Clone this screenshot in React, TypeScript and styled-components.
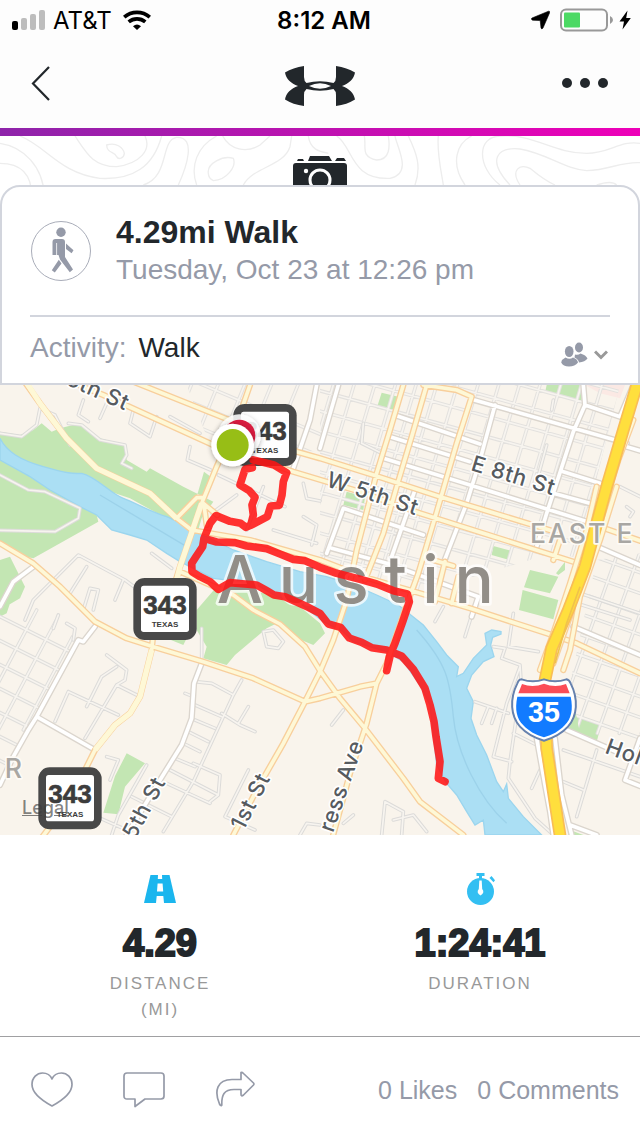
import React from "react";
import styled, { createGlobalStyle } from "styled-components";

const ink = "#22272b";
const slate = "#959aa8";
const rule = "#d2d5dd";
const sans = `"Liberation Sans", Arial, sans-serif`;
const system = `Inter, "Liberation Sans", sans-serif`;

const GlobalStyle = createGlobalStyle`
  * { box-sizing: border-box; }
  body { margin: 0; background: #fff; color: ${ink}; font-family: ${sans}; }
  button { border: 0; padding: 0; margin: 0; background: none; color: inherit; font: inherit; cursor: pointer; }
  svg { display: block; }
`;

const Page = styled.div`
  display: flex;
  flex-direction: column;
  min-height: 100vh;
`;

const StatusBar = styled.div`
  display: grid;
  grid-template-columns: 1fr auto 1fr;
  align-items: center;
  height: 40px;
  padding: 0 9px 0 12px;
  background: #fdfdfd;
  color: #000;
  font-family: ${system};
  font-size: 24px;
`;

const StatusGroup = styled.div<{ $end?: boolean }>`
  display: flex;
  align-items: center;
  gap: ${(p) => (p.$end ? 5 : 7)}px;
  justify-content: ${(p) => (p.$end ? "flex-end" : "flex-start")};
`;

const Carrier = styled.span`
  margin-right: 4px;
`;

const Clock = styled.time`
  padding-left: 5px;
  font-weight: 600;
`;

const NavBar = styled.header`
  display: grid;
  grid-template-columns: 1fr auto 1fr;
  align-items: center;
  height: 88px;
  padding: 0 31px;
  background: #fdfdfd;
`;

const NavButton = styled.button<{ $end?: boolean }>`
  justify-self: ${(p) => (p.$end ? "end" : "start")};
`;

const Accent = styled.div`
  height: 8px;
  background: linear-gradient(90deg, #8e24aa, #ee00b8);
`;

const Cover = styled.section`
  position: relative;
  display: flex;
  flex-direction: column;
  align-items: center;
  padding-top: 19px;
`;

const Contours = styled.svg`
  position: absolute;
  top: 0;
  left: 0;
  width: 100%;
  height: 60px;
`;

const PhotoButton = styled.button`
  position: relative;
  height: 30px;
  overflow: hidden;
`;

const Card = styled.article`
  position: relative;
  width: 100%;
  padding: 31px 28px 0;
  border: 2px solid ${rule};
  border-radius: 20px 20px 0 0;
  background: #fff;
`;

const Summary = styled.div`
  display: flex;
  align-items: center;
  gap: 24px;
  height: 99px;
  padding-bottom: 31px;
  border-bottom: 2px solid ${rule};
`;

const Title = styled.h1`
  margin: 0;
  font-size: 32px;
  line-height: 38px;
  font-weight: 700;
`;

const When = styled.p`
  margin: 0;
  color: ${slate};
  font-size: 28px;
  line-height: 38px;
`;

const ActivityRow = styled.div`
  display: flex;
  align-items: flex-start;
  justify-content: space-between;
  height: 66px;
  padding-top: 14px;
  font-size: 28px;
  line-height: 34px;
`;

const Field = styled.div`
  display: flex;
  gap: 12px;
`;

const Muted = styled.span`
  color: ${slate};
`;

const PrivacyButton = styled.button`
  display: flex;
  align-items: center;
  gap: 6px;
  padding: 11px 2px 0 0;
`;

const MapFrame = styled.section`
  position: relative;
  height: 450px;
  overflow: hidden;
`;

const MapArt = styled.svg`
  width: 100%;
  height: 100%;
`;

const LegalLink = styled.a`
  position: absolute;
  left: 22px;
  bottom: 16px;
  color: rgba(60, 60, 60, 0.65);
  font-family: ${system};
  font-size: 18px;
  line-height: 22px;
  font-weight: 500;
`;

const Stats = styled.dl`
  display: grid;
  grid-template-columns: 1fr 1fr;
  margin: 0;
  padding: 38px 0 13px;
  border-bottom: 1px solid #a0a0a2;
`;

const Stat = styled.div`
  display: flex;
  flex-direction: column;
  align-items: center;
  text-align: center;
`;

const StatValue = styled.dd`
  order: 1;
  margin: 13px 0 3px;
  font-size: 38px;
  line-height: 50px;
  font-weight: 700;
  -webkit-text-stroke: 2px ${ink};
`;

const StatLabel = styled.dt`
  order: 2;
  max-width: 120px;
  color: #999;
  font-size: 17px;
  line-height: 26px;
  letter-spacing: 2px;
  text-transform: uppercase;
`;

const Footer = styled.footer`
  display: flex;
  flex: 1;
  align-items: center;
  justify-content: space-between;
  min-height: 99px;
  padding: 7px 21px 0 31px;
  color: ${slate};
`;

const Group = styled.div<{ $gap: number }>`
  display: flex;
  gap: ${(p) => p.$gap}px;
`;

const CountButton = styled.button`
  font-size: 25px;
  line-height: 34px;
`;

/* Parallel streets: n copies of one segment, each moved on by a fixed step. */
const streets = (x: number, y: number, dx: number, dy: number, sx: number, sy: number, n: number) =>
  Array.from({ length: n }, (_, i) => `M${x + sx * i} ${y + sy * i}l${dx} ${dy}`).join("");

const downtown = streets(930, -220, 1000, 275, 0, 61, 16) + streets(1000, 15, -200, 670, 62, 0, 17);
const eastSide = streets(1640, 480, 300, 105, 0, 62, 10) + streets(1860, 500, -200, 560, 66, 0, 6);
const southWest = streets(-20, 700, 260, 130, 0, 72, 8) + streets(110, 690, -190, 360, 75, 0, 4);
const northWest = streets(430, -60, 560, 235, 0, 66, 5) + streets(500, 0, -90, 220, 80, 0, 6);

const smallRoads = [
  "M0 160l65 10 45-35 10-50 45 20 45 90M205 130l40 5 55 45 75 15 5 30-15 25 30 15",
  "M0 285l85 45 50 5 105 50-5 30-70 40-165-4",
  "M75 720l25-60 135-135 140 75 80 60M210 640l50-80M250 690l20-65 25 5-15 60M370 600l-25 60M455 520l60 45",
  "M710 345l-75 55M655 285l200 95M790 320l-50 130M820 450l130 40M910 410l40 25-15 60M910 310l10 45 40 8",
  "M250 60l-15 45 30 20M320 70l-20 45M400 90l-10 40 60 40 20-60M510 110l90 50M570 200l-8 40 70 30",
  "M200 730l25 15-5 35M175 705l-15 40",
  "M320 825l60 45-5 30-25 15-95 160M350 860l-45 30-45 90M205 935l150 70M205 935l-40 90M350 915l60 30",
  "M605 745v90M585 905l50 5 65 35 25-45M555 940l25 10M700 945l-120 260-90 150M585 975l80 35M665 1000l55 35 45 20M745 980l-30 50M585 1020l60 25M565 1055l60 30M550 1090l50 25M525 1135l60 25M510 1170l145 75",
  "M440 1155l-85 150-20 60M395 1250l120 60M580 1150l80 35-5 60-25 20M500 1210l130 60M320 1130l35 10-25 60M745 1170l-70 140 90 40M290 1310l90 40M900 1365l20-35 40 5",
  "M790 755l30-5 30 35-15 20-35-5z",
  "M1220 700l-25 70M1330 680l-25 45M1420 690l-25 80M1480 800l35 5-10 30 55 20 5 80M1540 700l-15 100 90 15M1425 965l100 35M1465 980l-20 50M1490 985l-15 45M1560 860l-40 110-40 160 55 15M1560 935l-30 210-5 50 80 120 50 45",
  "M1145 1365l10-100 55 30-5 70M1180 1320l60-15 40 50M1030 990l-35 45M1060 1305l-30 25",
  "M1540 1060l80 40M1620 1170l-25 55",
  "M1690 1110l230 80M1690 1205l60 25M1790 1110l-60 200",
  "M1090 130l-5 60 60 30M1640 195l-30 110M1660 60l-5 30M1860 320l60 30M1880 380l20 15-10 15",
  "M1740 640l180 60M1730 670l160 50",
].join("");

const whiteRoads = [
  "M1015 15L960 205M1415 58L1880 190M1485 75L1440 240 1400 370 1330 550M1190 107l250 85M1170 170l240 75M1150 235l260 80 400 125",
  "M1750 15l5 60-35 80-80 245-30 100M1755 75l105 35 40-95M1880 200l40 12M1690 275l110 35M1660 340l120 33",
  "M1030 385l240 80M1030 385l-50 135M1245 330l-70 200M995 505l165 45 275 100-20 60M1770 490l150 65M950 15l-20 105-50 145",
  "M1720 740l200 85M1700 1050l160 70M1920 1075l-45 125 45 18M1610 1075l25 140 15 80 10 70M1665 1075l20 170 20 80 10 40M1710 1335l80 30",
  "M285 740l-35 45-15-5-125 230-25 40-45 80-40 85M110 1010l175 100M605 850l-23 60-7 105-30 80-65 105-100 165M100 560l-60 45-40 75",
].join("");

const yellowRoads = [
  "M70 0l50 70 80 105 90 90 160 75 80 75 45 35 175 30 210 60 130 50 170 50 150 45 230 75 90 30 190 90",
  "M200 0l110 45 330 150 240 80 200 60 180 65 460 145",
  "M400 5l300 120 190 90 70 20 160 50 200 65 345 105M1800 440l120 42",
  "M750 15l-40 115-60 130-45 110-30 90-35 100-25 80M460 760l-5 50-35 140-30 50-45 35-60 75-45 90-90 140-30 40",
  "M530 415l60-62h20M610 370l42 35M612 375l8 60M540 575l160 70 60 45 80 42 75 68 45 72 60 83 75 90 115 150 50 70 130 100",
  "M0 490l100 60 80 70 105 105 95 50 80 25 150 45 150 50 155 70 45-10 120-35 50-10",
  "M700 1365l70-135 80-140 65-125 45-90 40-95 40-120 30-150 60-230 40-130 40-135",
  "M1270 15l100 15 45 20M1280 15l-45 155-45 150-40 140-55 140M1415 50l-45 140-70 240-45 150-35 95-60 175-30 60-30 120-50 150-75 275",
  "M1300 540l60 18M1335 545l-30 120M1375 590l-20 80M1680 480l-20 60",
].join("");

const frontage = "M1900 120l-45 120-75 240-60 200-60 170M1850 320l-50 160-60 170-30 160-20 60M1790 320l-30 130-50 160-50 150-40 110";

const interstate = "M1915 0L1870 150 1820 320 1785 450 1755 560 1705 690 1655 805 1635 900 1640 1105 1660 1235 1680 1365";

const river =
  "M0 175C20 215 60 240 130 260S220 282 245 280C290 290 330 340 370 355S450 395 500 410C550 430 580 460 620 470L700 510 800 545 900 575 980 590 1060 615 1130 645 1195 675 1270 735 1310 785 1340 825 1375 860 1370 890 1390 880 1420 835 1460 795 1455 760 1475 750 1503 755 1503 762 1478 772 1472 795 1482 830 1450 845 1415 885 1400 925 1420 965 1413 1015 1430 1065 1460 1125 1490 1205 1510 1235 1520 1212 1525 1255 1570 1310 1625 1365H1455L1450 1320 1425 1335 1400 1295 1370 1245 1340 1210 1310 1155 1290 975 1260 915 1210 845 1160 815 1060 785 1030 755 970 725 900 670 830 650 780 620 720 605 640 595 540 545 500 520 440 480 390 465 335 450 290 405 240 380 150 330 90 290 0 240Z";

const parks = [
  "M0 155l60 10 40-15 25-20 30 25 25-10 60-15 60 45 75 20 5 45 60 35 10-10 100 55 90 45-35 50-15 50-200-110-180-60-210-80z",
  "M612 275l-22 75 20 5 22-65z",
  "M0 235l290 170 5 20-195 110-25-5-75-40z",
  "M0 540l30-10 45 90-15 35-60 35z",
  "M590 690l60-70 150 20 100 40 60 50 15 30-35 35-60-25-40-45-40 20-95 80-25 30-70-20 10-35-30-50z",
  "M310 1298l35-110 35-68 55 30-60 70-20 83z",
  "M500 775h60l-10 20z",
  "M0 685l30-15-10 30-20 10z",
  "M1145 38l50 12-10 47-55-12z",
  "M1640 15h105v52l-110-29z",
  "M1040 335l55 15-5 40-60-15z",
  "M1480 498l53 14-5 28-53-15z",
  "M1590 570l85 20-25 50-78-18z",
  "M1568 630l107 30-15 58-103-28z",
  "M1695 545v25l-20 15-7-5z",
  "M1720 1000l85 30-15 55-85-35z",
  "M1710 1350l40 15h-45z",
].join("");

const Road = ({ d, width, edge, fill, line }: { d: string; width: number; edge: number; fill: string; line: string }) => (
  <g fill="none" strokeLinejoin="round" strokeLinecap="round">
    <path d={d} stroke={line} strokeWidth={width + edge * 2} />
    <path d={d} stroke={fill} strokeWidth={width} />
  </g>
);

const StateShield = ({ x, y }: { x: number; y: number }) => (
  <g transform={`translate(${x} ${y})`} textAnchor="middle" fill="#3c3c3c" fontFamily={sans} fontWeight="700">
    <rect width="190" height="186" rx="34" fill="#484848" />
    <rect x="23" y="23" width="144" height="139" rx="8" fill="#fff" />
    <text x="95" y="108" fontSize="78" stroke="#3c3c3c" strokeWidth="2">343</text>
    <text x="95" y="148" fontSize="24">TEXAS</text>
  </g>
);

const RouteMap = () => (
  <MapArt viewBox="0 15 1920 1350" preserveAspectRatio="xMidYMid slice" role="img" aria-label="Map of the walk in Austin">
    <defs>
      <clipPath id="downtown"><path d="M960 15h900l-130 520-60-20-430 130-280-110z" /></clipPath>
      <clipPath id="east"><path d="M1790 540l130-20v600l-180-60-30-150z" /></clipPath>
      <clipPath id="southwest"><path d="M0 700l110-30 120 110-120 230L0 1180z" /></clipPath>
      <clipPath id="northwest"><path d="M560 15h400v200l-330-20z" /></clipPath>
      <filter id="lift" x="-30%" y="-30%" width="160%" height="160%">
        <feDropShadow dx="0" dy="4" stdDeviation="8" floodOpacity="0.35" />
      </filter>
    </defs>
    <rect y="0" width="1920" height="1380" fill="#f9f4ec" />
    <path d={parks} fill="#c3e6b3" />
    <path d="M1755 15h120l-15 40-60-15z" fill="#fbe9e4" />
    <path d={river} fill="#abdff4" stroke="#9bd5ee" strokeWidth="4" />
    <path d="M300 345L560 500M1250 750C1340 850 1350 900 1360 1010S1440 1260 1520 1330" fill="none" stroke="#9cd2ea" strokeWidth="4" />
    <g clipPath="url(#downtown)"><Road d={downtown} width={5} edge={3} fill="#f7f4ef" line="#e3e1de" /></g>
    <g clipPath="url(#east)"><Road d={eastSide} width={5} edge={3} fill="#f7f4ef" line="#dfdedb" /></g>
    <g clipPath="url(#southwest)"><Road d={southWest} width={5} edge={3} fill="#f7f4ef" line="#dfdedb" /></g>
    <g clipPath="url(#northwest)"><Road d={northWest} width={5} edge={3} fill="#f7f4ef" line="#e3e1de" /></g>
    <Road d={smallRoads} width={5} edge={3} fill="#f7f4ef" line="#dcdbd9" />
    <Road d={whiteRoads} width={11} edge={4} fill="#fff" line="#dbd5cd" />
    <Road d={yellowRoads} width={11} edge={4} fill="#fef8d6" line="#f8cf9c" />
    <path d="M75 0L120 70 200 175 290 265 450 340 530 415M605 370L540 560 525 620M455 810L420 950 390 1000 345 1035 285 1110" fill="none" stroke="#fef8d6" strokeWidth="16" strokeLinejoin="round" />
    <Road d={frontage} width={11} edge={4} fill="#fef8d6" line="#f8cf9c" />
    <Road d={interstate} width={28} edge={5} fill="#ffdf3d" line="#f9bd55" />
    <path d="M1740 620l-40 110-35 120" fill="none" stroke="#f0c24b" strokeWidth="5" />

    <g fill="#565b60" stroke="#fff" strokeWidth="10" strokeLinejoin="round" paintOrder="stroke" fontFamily={system} fontSize="66" fontWeight="500" letterSpacing="2">
      <text transform="translate(194 12) rotate(24)">6th St</text>
      <text transform="translate(976 318) rotate(18)">W 5th St</text>
      <text transform="translate(1410 270) rotate(17)">E 8th St</text>
      <text transform="translate(1812 1118) rotate(20)">Hol</text>
      <text transform="translate(498 1206) rotate(-62)" textAnchor="end">5th St</text>
      <text transform="translate(812 1194) rotate(-63)" textAnchor="end">1st St</text>
      <text transform="translate(1092 1090) rotate(-71)" textAnchor="end">ress Ave</text>
    </g>
    <g fill="#a9a7a3" stroke="#fdfaf5" strokeWidth="10" strokeLinejoin="round" paintOrder="stroke" fontFamily={system} fontSize="80" fontWeight="500">
      <text x="1590" y="488" letterSpacing="6">EAST E</text>
      <text x="14" y="1195">R</text>
    </g>
    <text x="650" y="668" fill="#928e88" stroke="#fff" strokeOpacity="0.75" strokeWidth="16" strokeLinejoin="round" paintOrder="stroke" fontFamily={system} fontSize="196" fontWeight="500" letterSpacing="47">Austin</text>

    <StateShield x={700} y={72} />
    <StateShield x={400} y={594} />
    <StateShield x={115} y={1162} />

    <g transform="translate(1632 988)">
      <path d="M-67-90Q-33-78 0-90 33-78 67-90 76-88 80-78C104-30 100 20 72 52 52 74 28 86 0 94-28 86-52 74-72 52-100 20-104-30-80-78-76-88-74-89-67-90Z" fill="#fff" stroke="#6681ad" strokeWidth="6" />
      <path d="M-66-76Q-33-64 0-77 33-64 66-76L77-48H-77Z" fill="#fb4d57" />
      <path d="M-80-38H80C88 0 82 28 62 48 45 66 25 77 0 84-25 77-45 66-62 48-82 28-88 0-80-38Z" fill="#127bff" />
      <text y="39" textAnchor="middle" fill="#fff" fontFamily={sans} fontSize="86" fontWeight="700">35</text>
    </g>

    <g fill="none" stroke="#ff1414" strokeOpacity="0.87" strokeWidth="23" strokeLinecap="round" strokeLinejoin="round">
      <path d="M757 263L735 268 728 290 720 315 748 332 765 352 756 375 760 405 752 436 802 410 812 378 838 376 846 345 850 305 860 278 822 255 760 240M752 436L738 442 722 430 690 424 648 407 630 430 612 475 608 500 588 530 575 550 576 575 600 590 630 605 655 628 690 608 735 612 770 615 800 632 822 645 855 650 885 664 925 682 960 700 985 732 1022 742 1048 774 1085 787 1115 803 1160 810 1205 828 1240 868 1275 925 1290 975 1302 1025 1308 1070 1320 1145 1315 1195 1335 1205M612 475L650 486 705 488 740 498 800 506 840 522 880 538 915 542 960 562 1010 580 1080 598 1130 612 1180 632 1222 642 1228 665 1208 725 1185 790 1168 830 1160 872L1172 820" />
    </g>

    <g filter="url(#lift)">
      <circle cx="718" cy="167" r="64" fill="#fff" fillOpacity="0.85" />
      <circle cx="718" cy="167" r="48" fill="#d81e3f" />
    </g>
    <g filter="url(#lift)">
      <circle cx="698" cy="195" r="64" fill="#fff" />
      <circle cx="698" cy="195" r="48" fill="#97be13" />
    </g>
  </MapArt>
);

const SignalIcon = () => (
  <svg width="34" height="22" viewBox="0 0 34 22" fill="#bdbdbd">
    <rect y="12" width="6" height="9" rx="2" fill="#000" />
    <rect x="9" y="9" width="6" height="12" rx="2" />
    <rect x="18" y="5" width="6" height="16" rx="2" />
    <rect x="27" y="1" width="6" height="20" rx="2" />
  </svg>
);

const WifiIcon = () => (
  <svg width="28" height="20" viewBox="0 0 28 20" fill="none" stroke="#000" strokeWidth="3.7">
    <path d="M1.2 7.2C8.5 .7 19.5 .7 26.8 7.2" />
    <path d="M5.7 11.9C10.5 7.9 17.5 7.9 22.3 11.9" />
    <path d="M10 16.2Q14 12.8 18 16.2L14 20Z" fill="#000" stroke="none" />
  </svg>
);

const LocationIcon = () => (
  <svg width="19" height="20" viewBox="0 0 19 20">
    <path d="M17.5 1.2Q19 1 18.7 2.6L12 18Q10.6 19.8 10 18L9.2 10.6 1.600 10.200Q-.5 9.300 1 8Z" stroke="#000" strokeWidth="0.6" strokeLinejoin="round" />
  </svg>
);

const BatteryIcon = () => (
  <svg width="54" height="24" viewBox="0 0 54 24">
    <rect x="1" y="1.5" width="46" height="21" rx="5" fill="none" stroke="#999" strokeWidth="2" />
    <rect x="4" y="4.5" width="16" height="15" rx="1" fill="#4cd964" />
    <path d="M50 8Q53 9.500 53 12T50 16Z" fill="#999" />
  </svg>
);

const BoltIcon = () => (
  <svg width="12" height="20" viewBox="0 0 12 20">
    <path d="M8.5 .5L.5 11.5H5L3.5 19.5 11.8 8H7.2Z" />
  </svg>
);

const Logo = () => (
  <svg width="70" height="46" viewBox="285 61 70 46" fill={ink} fillRule="evenodd">
    <path d="M304 66V77Q304 81 306.500 83Q320 79.500 333.500 83Q336 81 336 77V66Q347 67.500 355 72.500C354 79 349 83.500 342 86 349 88.500 354 93 355 99.500Q347 104.500 336 106V95Q336 91 333.500 89Q320 92.500 306.500 89Q304 91 304 95V106Q293 104.500 285 99.500C286 93 291 88.500 298 86 291 83.500 286 79 285 72.500Q293 67.500 304 66ZM309 86Q320 91.500 331 86 320 80.500 309 86Z" />
  </svg>
);

const CameraIcon = () => (
  <svg width="54" height="40" viewBox="0 0 54 40" fill={ink}>
    <path d="M5 4H10L11 6H4ZM17 1H36L39 6H15ZM44 3H51L53 6H42Z" />
    <rect y="8" width="54" height="38" rx="3" />
    <circle cx="27" cy="25" r="10" fill="none" stroke="#fff" strokeWidth="3" />
    <circle cx="13" cy="16" r="2.2" fill="#fff" />
  </svg>
);

const WalkIcon = () => (
  <svg width="62" height="62" viewBox="0 -1 62 62" fill={slate}>
    <circle cx="31" cy="30" r="29.5" fill="none" stroke="#a9adb9" />
    <circle cx="31" cy="11.3" r="4.7" />
    <g transform="translate(1 0)">
      <path d="M24.5 18H31Q34 18 34 21V36L42 48.5 38.8 51.300 29 38.500 27.500 34H21.500V21Q21.500 18 24.500 18Z" />
      <path d="M25.600 22V34" stroke="#fff" strokeWidth="0.8" />
      <path d="M35 22.500L42.500 29.300 40.600 32.300 35 28ZM27.800 38.800L30.500 42.500 23.800 51.500 20.800 49.300Z" />
    </g>
  </svg>
);

const FriendsIcon = () => (
  <svg width="27" height="25" viewBox="0 0 27 25" fill={slate}>
    <ellipse cx="18" cy="5.5" rx="4" ry="5" />
    <path d="M14 12.500Q17 13.500 19.500 11.500 25 13 26.500 16.500 24 20 18 20.500 17.500 17.500 13.500 15.500Z" />
    <ellipse cx="8.2" cy="9.5" rx="4.3" ry="5.5" />
    <path d="M4.500 15.500Q8.500 18 12 15.500 16.500 17 17 20.500 14 24.500 8 24.500T.2 20.500Q1 17 4.500 15.500Z" />
  </svg>
);

const RoadIcon = () => (
  <svg width="32" height="32" viewBox="0 0 32 32">
    <path d="M6.5 2H25.5L32 30H0Z" fill="#1bb6ee" />
    <path d="M14 2H18L18.2 6H13.8ZM13.6 10.5H18.6L19.2 18.5H13ZM12.7 23H19.3L20 30H12Z" fill="#fff" />
  </svg>
);

const StopwatchIcon = () => (
  <svg width="30" height="32" viewBox="-1 0 30 32" fill="#33bff2">
    <circle cx="14.5" cy="18.500" r="13.5" />
    <path d="M10.5 0H18.5V3H16V6H13V3H10.5ZM25.5 3L29 7.300 27.500 9.300 23.500 5Z" />
    <path d="M13.3 7.5H15.7L16.2 16Q19.2 19.500 14.500 22.500 9.800 19.500 12.800 16Z" fill="#fff" />
  </svg>
);

const ActionIcon = ({ d }: { d: string }) => (
  <svg width="42" height="38" viewBox="0 0 42 38" fill="none" stroke={slate} strokeWidth="1.7" strokeLinejoin="round">
    <path d={d} />
  </svg>
);

const heart = "M21 35C10 29 1 22 1 13.5 1 6.5 6 2 11.5 2 16 2 19.5 4.5 21 8 22.5 4.5 26 2 30.5 2 36 2 41 6.5 41 13.5 41 22 32 29 21 35Z";
const comment = "M4 2H38Q41 2 41 5V25Q41 28 38 28H22L12 35.5V28H4Q1 28 1 25V5Q1 2 4 2Z";
const share = "M26 1.5Q27 1 28.5 2.5L38.5 12Q39.3 13 38.5 14L28.5 24Q26 26 26 23V18.5H19C9 18.5 6.500 24 6.800 34 6 35.500 5 34 4.500 33-1 20 2 8.500 17 8.500H26Z";

export default function App() {
  return (
    <Page>
      <GlobalStyle />
      <StatusBar>
        <StatusGroup>
          <SignalIcon />
          <Carrier>AT&amp;T</Carrier>
          <WifiIcon />
        </StatusGroup>
        <Clock>8:12 AM</Clock>
        <StatusGroup $end>
          <LocationIcon />
          <span />
          <BatteryIcon />
          <BoltIcon />
        </StatusGroup>
      </StatusBar>

      <NavBar>
        <NavButton aria-label="Back">
          <svg width="20" height="36" viewBox="0 0 20 36" fill="none" stroke={ink} strokeWidth="2.2">
            <path d="M18 1L2 17.500 18 34" />
          </svg>
        </NavButton>
        <Logo />
        <NavButton $end aria-label="More options">
          <svg width="48" height="14" viewBox="0 0 48 14" fill={ink}>
            <circle cx="6" cy="6" r="5" />
            <circle cx="24" cy="6" r="5" />
            <circle cx="42" cy="6" r="5" />
          </svg>
        </NavButton>
      </NavBar>
      <Accent />

      <Cover>
        <Contours viewBox="0 408 1920 180" preserveAspectRatio="xMidYMin slice" fill="none" stroke="#ededed" strokeWidth="4" aria-hidden="true">
          <path d="M60 408C140 440 180 520 300 535 400 540 460 500 485 408M225 408C260 460 280 500 350 500 420 490 455 450 435 408M320 435C350 425 370 445 373 460 372 475 355 480 350 470 345 455 320 460 320 435ZM0 430C70 440 130 500 133 588M0 490C50 490 95 510 95 588M430 555C510 530 480 420 530 412 590 410 560 500 535 555M650 408C590 440 570 500 590 555M625 520C620 490 670 465 700 475 710 500 680 540 640 542Q625 535 625 520ZM668 408C690 450 740 460 780 435L810 408M730 555C760 500 850 500 870 440L875 408M925 408C930 450 960 455 985 460M1010 408C1060 440 1050 540 1170 535 1240 520 1190 440 1185 408M1093 408C1100 440 1080 470 1130 480 1170 480 1170 440 1165 408M1225 408C1250 460 1265 500 1245 555M1315 408C1310 460 1325 520 1330 555M1395 555C1350 490 1370 430 1415 408M1500 555C1430 500 1430 410 1500 408 1600 400 1660 460 1760 460 1830 460 1860 420 1920 430M1530 555C1460 480 1490 440 1560 447 1640 460 1700 510 1760 512 1830 510 1860 485 1920 488M1560 555C1530 510 1560 490 1590 505 1620 530 1640 545 1665 555M1790 555C1820 545 1840 545 1850 555" />
        </Contours>
        <PhotoButton aria-label="Add photo"><CameraIcon /></PhotoButton>
        <Card>
          <Summary>
            <WalkIcon />
            <div>
              <Title>4.29mi Walk</Title>
              <When>Tuesday, Oct 23 at 12:26 pm</When>
            </div>
          </Summary>
          <ActivityRow>
            <Field><Muted>Activity:</Muted><span>Walk</span></Field>
            <PrivacyButton aria-label="Visible to friends">
              <FriendsIcon />
              <svg width="14" height="10" viewBox="0 0 14 10" fill="none" stroke="#999" strokeWidth="3">
                <path d="M1 1.5L7 7.5 13 1.5" />
              </svg>
            </PrivacyButton>
          </ActivityRow>
        </Card>
      </Cover>

      <MapFrame>
        <RouteMap />
        <LegalLink href="#legal">Legal</LegalLink>
      </MapFrame>

      <Stats>
        <Stat>
          <RoadIcon />
          <StatLabel>Distance (mi)</StatLabel>
          <StatValue>4.29</StatValue>
        </Stat>
        <Stat>
          <StopwatchIcon />
          <StatLabel>Duration</StatLabel>
          <StatValue>1:24:41</StatValue>
        </Stat>
      </Stats>

      <Footer>
        <Group $gap={50}>
          <button aria-label="Like"><ActionIcon d={heart} /></button>
          <button aria-label="Comment"><ActionIcon d={comment} /></button>
          <button aria-label="Share"><ActionIcon d={share} /></button>
        </Group>
        <Group $gap={20}>
          <CountButton>0 Likes</CountButton>
          <CountButton>0 Comments</CountButton>
        </Group>
      </Footer>
    </Page>
  );
}
